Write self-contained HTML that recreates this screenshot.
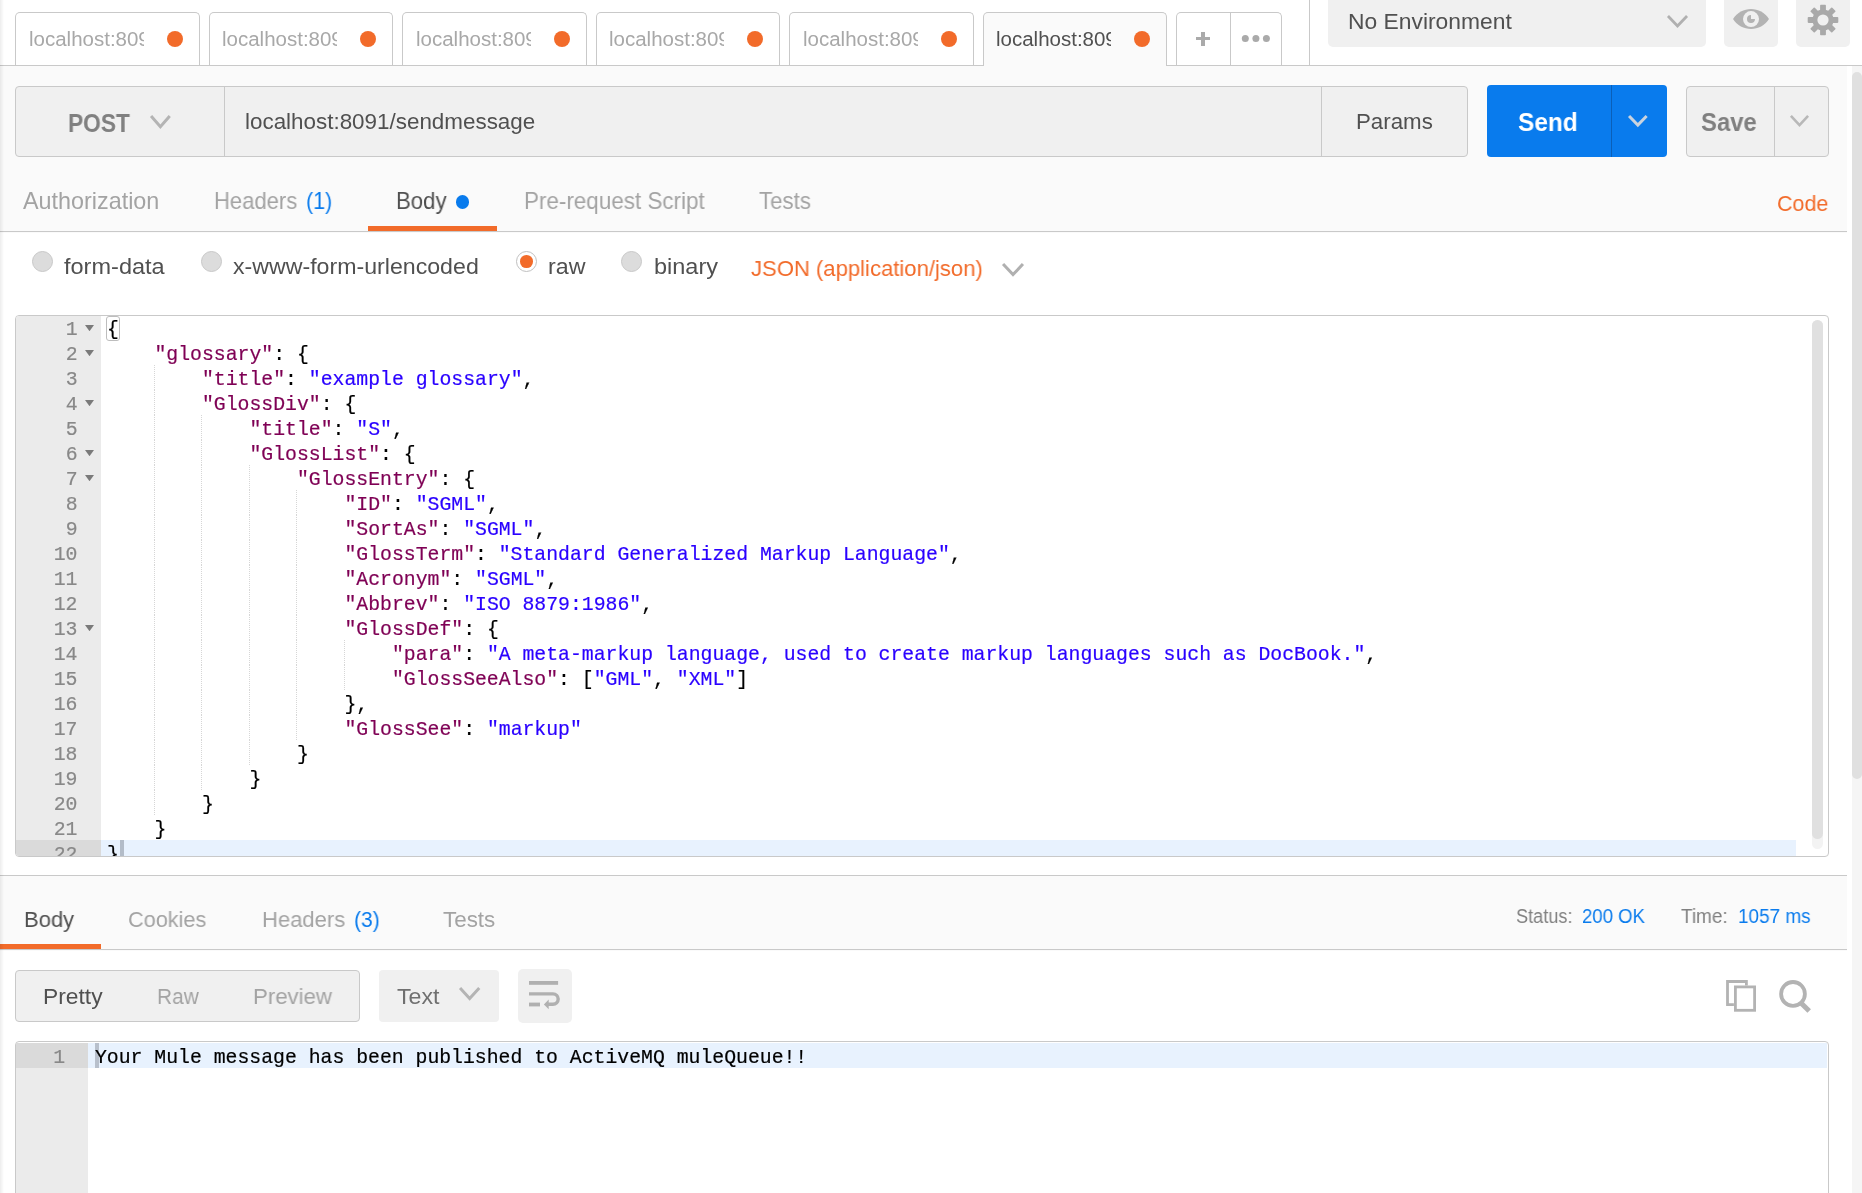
<!DOCTYPE html><html><head><meta charset="utf-8"><style>
html,body{margin:0;padding:0}
body{width:1862px;height:1193px;overflow:hidden;position:relative;background:#fafafa;font-family:"Liberation Sans",sans-serif}
.t{position:absolute;white-space:pre;line-height:0;transform-origin:0 0;will-change:transform}
.code{position:absolute;font-family:"Liberation Mono",monospace;font-size:19.79px;line-height:25px;white-space:pre;color:#000;will-change:transform;-webkit-text-stroke:0.2px currentColor}
.k{color:#7f0055}.s{color:#2a00ff}
</style></head><body>

<div style="position:absolute;left:0px;top:0px;width:1862px;height:66px;background:#fff"></div>
<div style="position:absolute;left:15px;top:11.5px;width:184.5px;height:54.5px;box-sizing:border-box;background:#fff;border:1px solid #c9c9c9;border-bottom:none;border-radius:5px 5px 0 0"></div>
<div style="position:absolute;left:208.5px;top:11.5px;width:184.5px;height:54.5px;box-sizing:border-box;background:#fff;border:1px solid #c9c9c9;border-bottom:none;border-radius:5px 5px 0 0"></div>
<div style="position:absolute;left:402px;top:11.5px;width:184.5px;height:54.5px;box-sizing:border-box;background:#fff;border:1px solid #c9c9c9;border-bottom:none;border-radius:5px 5px 0 0"></div>
<div style="position:absolute;left:595.5px;top:11.5px;width:184.5px;height:54.5px;box-sizing:border-box;background:#fff;border:1px solid #c9c9c9;border-bottom:none;border-radius:5px 5px 0 0"></div>
<div style="position:absolute;left:789px;top:11.5px;width:184.5px;height:54.5px;box-sizing:border-box;background:#fff;border:1px solid #c9c9c9;border-bottom:none;border-radius:5px 5px 0 0"></div>
<div style="position:absolute;left:982.5px;top:11.5px;width:184.5px;height:54.5px;box-sizing:border-box;background:#fafafa;border:1px solid #c9c9c9;border-bottom:none;border-radius:5px 5px 0 0"></div>
<div class="t" style="left:28.70px;top:39.00px;font-size:19.95px;color:#a8a8a8;transform:scaleX(1.0279);"><div style="position:absolute;left:0;top:-30px;height:60px;width:111.9px;overflow:hidden"><div style="position:absolute;left:0;top:30px;line-height:0">localhost:8091/sendmessage</div></div></div>
<svg style="position:absolute;left:164.5px;top:28.799999999999997px" width="20" height="20"><circle cx="10" cy="10" r="8" fill="#f26b2a"/></svg>
<div class="t" style="left:222.20px;top:39.00px;font-size:19.95px;color:#a8a8a8;transform:scaleX(1.0279);"><div style="position:absolute;left:0;top:-30px;height:60px;width:111.9px;overflow:hidden"><div style="position:absolute;left:0;top:30px;line-height:0">localhost:8091/sendmessage</div></div></div>
<svg style="position:absolute;left:358.0px;top:28.799999999999997px" width="20" height="20"><circle cx="10" cy="10" r="8" fill="#f26b2a"/></svg>
<div class="t" style="left:415.70px;top:39.00px;font-size:19.95px;color:#a8a8a8;transform:scaleX(1.0279);"><div style="position:absolute;left:0;top:-30px;height:60px;width:111.9px;overflow:hidden"><div style="position:absolute;left:0;top:30px;line-height:0">localhost:8091/sendmessage</div></div></div>
<svg style="position:absolute;left:551.5px;top:28.799999999999997px" width="20" height="20"><circle cx="10" cy="10" r="8" fill="#f26b2a"/></svg>
<div class="t" style="left:609.20px;top:39.00px;font-size:19.95px;color:#a8a8a8;transform:scaleX(1.0279);"><div style="position:absolute;left:0;top:-30px;height:60px;width:111.9px;overflow:hidden"><div style="position:absolute;left:0;top:30px;line-height:0">localhost:8091/sendmessage</div></div></div>
<svg style="position:absolute;left:745.0px;top:28.799999999999997px" width="20" height="20"><circle cx="10" cy="10" r="8" fill="#f26b2a"/></svg>
<div class="t" style="left:802.70px;top:39.00px;font-size:19.95px;color:#a8a8a8;transform:scaleX(1.0279);"><div style="position:absolute;left:0;top:-30px;height:60px;width:111.9px;overflow:hidden"><div style="position:absolute;left:0;top:30px;line-height:0">localhost:8091/sendmessage</div></div></div>
<svg style="position:absolute;left:938.5px;top:28.799999999999997px" width="20" height="20"><circle cx="10" cy="10" r="8" fill="#f26b2a"/></svg>
<div class="t" style="left:996.20px;top:39.00px;font-size:19.95px;color:#505050;transform:scaleX(1.0279);"><div style="position:absolute;left:0;top:-30px;height:60px;width:111.9px;overflow:hidden"><div style="position:absolute;left:0;top:30px;line-height:0">localhost:8091/sendmessage</div></div></div>
<svg style="position:absolute;left:1132.0px;top:28.799999999999997px" width="20" height="20"><circle cx="10" cy="10" r="8" fill="#f26b2a"/></svg>
<div style="position:absolute;left:1176px;top:11.5px;width:106px;height:54.5px;box-sizing:border-box;background:#fff;border:1px solid #c9c9c9;border-bottom:none;border-radius:5px 5px 0 0"></div>
<div style="position:absolute;left:1229.5px;top:11.5px;width:1px;height:54.5px;background:#c9c9c9"></div>
<div style="position:absolute;left:1196px;top:37px;width:14px;height:3.2px;background:#aaa"></div>
<div style="position:absolute;left:1201.4px;top:31.6px;width:3.2px;height:14px;background:#aaa"></div>
<svg style="position:absolute;left:1230px;top:28px" width="50" height="20" viewBox="1230 28 50 20"><circle cx="1245.3" cy="38.4" r="3.5" fill="#aaa"/><circle cx="1255.9" cy="38.4" r="3.5" fill="#aaa"/><circle cx="1266.4" cy="38.4" r="3.5" fill="#aaa"/></svg>
<div style="position:absolute;left:1308.5px;top:0px;width:1px;height:66px;background:#c9c9c9"></div>
<div style="position:absolute;left:0px;top:65px;width:1862px;height:1px;background:#c9c9c9"></div>
<div style="position:absolute;left:983.5px;top:60px;width:182.5px;height:8px;background:#fafafa"></div>
<div style="position:absolute;left:1328px;top:-6px;width:378px;height:52.8px;background:#f0f0f0;border-radius:5px"></div>
<div class="t" style="left:1348.20px;top:21.50px;font-size:22.13px;color:#505050;transform:scaleX(1.0323);">No Environment</div>
<svg style="position:absolute;left:1664px;top:11.5px" width="27" height="18.0"><polyline points="3.98,3.98 13.5,14.02 23.02,3.98" fill="none" stroke="#b0b0b0" stroke-width="2.8"/></svg>
<div style="position:absolute;left:1724px;top:-6px;width:54px;height:52.9px;background:#f0f0f0;border-radius:5px"></div>
<svg style="position:absolute;left:1731px;top:7px" width="40" height="25" viewBox="0 0 40 25">
<path d="M2 12.1 C10 -1.4 30 -1.4 38 12.1 C30 25.4 10 25.4 2 12.1Z" fill="#b3b3b3"/>
<circle cx="20" cy="12.1" r="8" fill="#f0f0f0"/>
<path d="M20 8 A4 4 0 1 0 24 12.1 L20 12.1Z" fill="#b3b3b3"/>
</svg>
<div style="position:absolute;left:1796px;top:-6px;width:54px;height:52.9px;background:#f0f0f0;border-radius:5px"></div>
<svg style="position:absolute;left:1803px;top:0px" width="40" height="40" viewBox="-20 -20 40 40">
<g fill="#a9a9a9"><rect x="-2.9" y="-15.3" width="5.8" height="8" rx="0.8" transform="rotate(0)"/><rect x="-2.9" y="-15.3" width="5.8" height="8" rx="0.8" transform="rotate(45)"/><rect x="-2.9" y="-15.3" width="5.8" height="8" rx="0.8" transform="rotate(90)"/><rect x="-2.9" y="-15.3" width="5.8" height="8" rx="0.8" transform="rotate(135)"/><rect x="-2.9" y="-15.3" width="5.8" height="8" rx="0.8" transform="rotate(180)"/><rect x="-2.9" y="-15.3" width="5.8" height="8" rx="0.8" transform="rotate(225)"/><rect x="-2.9" y="-15.3" width="5.8" height="8" rx="0.8" transform="rotate(270)"/><rect x="-2.9" y="-15.3" width="5.8" height="8" rx="0.8" transform="rotate(315)"/><circle r="10.6"/></g><circle r="5.6" fill="#f0f0f0"/></svg>
<div style="position:absolute;left:1847px;top:66px;width:5px;height:1127px;background:#fff"></div>
<div style="position:absolute;left:1852px;top:66px;width:10px;height:1127px;background:#f5f5f5"></div>
<div style="position:absolute;left:1852px;top:72px;width:10px;height:707px;background:#e0e0e0;border-radius:5px"></div>
<div style="position:absolute;left:14.5px;top:85.5px;width:1453.5px;height:71px;box-sizing:border-box;background:#f0f0f0;border:1px solid #c9c9c9;border-radius:4px"></div>
<div style="position:absolute;left:223.5px;top:85.5px;width:1px;height:71px;background:#c9c9c9"></div>
<div style="position:absolute;left:1321.3px;top:85.5px;width:1px;height:71px;background:#c9c9c9"></div>
<div class="t" style="left:67.90px;top:122.60px;font-size:25.27px;color:#808080;transform:scaleX(0.9004);font-weight:bold;">POST</div>
<svg style="position:absolute;left:147px;top:112px" width="26.80000000000001" height="18.700000000000003"><polyline points="4.05,4.05 13.400000000000006,14.650000000000002 22.75000000000001,4.05" fill="none" stroke="#b4b4b4" stroke-width="3"/></svg>
<div class="t" style="left:244.50px;top:121.50px;font-size:22.42px;color:#505050;">localhost:8091/sendmessage</div>
<div class="t" style="left:1356.20px;top:122.30px;font-size:22.13px;color:#505050;transform:scaleX(1.0074);">Params</div>
<div style="position:absolute;left:1487px;top:85px;width:179.7px;height:71.5px;background:#097bed;border-radius:4px"></div>
<div style="position:absolute;left:1611.2px;top:85px;width:1.2px;height:71.5px;background:#0a5fb8"></div>
<div class="t" style="left:1518.00px;top:122.40px;font-size:25.36px;color:#fff;transform:scaleX(0.9628);font-weight:bold;">Send</div>
<svg style="position:absolute;left:1625px;top:111.7px" width="25.700000000000045" height="17.099999999999994"><polyline points="4.05,4.05 12.850000000000023,13.049999999999994 21.650000000000045,4.05" fill="none" stroke="#c9d3df" stroke-width="3"/></svg>
<div style="position:absolute;left:1685.5px;top:85.5px;width:143px;height:71px;box-sizing:border-box;background:#f0f0f0;border:1px solid #c9c9c9;border-radius:4px"></div>
<div style="position:absolute;left:1773.5px;top:85.5px;width:1px;height:71px;background:#c9c9c9"></div>
<div class="t" style="left:1701.20px;top:122.40px;font-size:25.36px;color:#808080;transform:scaleX(0.9423);font-weight:bold;">Save</div>
<svg style="position:absolute;left:1786.6px;top:111.7px" width="25.0" height="17.099999999999994"><polyline points="3.91,3.91 12.5,13.189999999999994 21.09,3.91" fill="none" stroke="#b8b8b8" stroke-width="2.6"/></svg>
<div class="t" style="left:22.90px;top:201.00px;font-size:22.99px;color:#a3a3a3;transform:scaleX(1.0161);">Authorization</div>
<div class="t" style="left:214.20px;top:201.00px;font-size:22.99px;color:#a3a3a3;transform:scaleX(0.9574);">Headers</div>
<div class="t" style="left:306.20px;top:201.00px;font-size:22.99px;color:#097bed;transform:scaleX(0.9306);">(1)</div>
<div class="t" style="left:395.70px;top:201.00px;font-size:22.99px;color:#505050;transform:scaleX(0.9653);">Body</div>
<div style="position:absolute;left:456.0px;top:195.3px;width:13.4px;height:13.4px;border-radius:50%;background:#097bed"></div>
<div class="t" style="left:524.20px;top:201.00px;font-size:22.99px;color:#a3a3a3;transform:scaleX(0.9757);">Pre-request Script</div>
<div class="t" style="left:758.90px;top:201.00px;font-size:22.99px;color:#a3a3a3;transform:scaleX(0.9668);">Tests</div>
<div class="t" style="left:1777.20px;top:203.50px;font-size:22.23px;color:#f26b2a;transform:scaleX(0.9656);">Code</div>
<div style="position:absolute;left:368px;top:225.8px;width:129px;height:5px;background:#f26b2a"></div>
<div style="position:absolute;left:0px;top:231.3px;width:1847px;height:1px;background:#c9c9c9"></div>
<div style="position:absolute;left:0px;top:232.6px;width:1847px;height:642.7px;background:#fff"></div>
<div style="position:absolute;left:32.2px;top:251.10000000000002px;width:21px;height:21px;box-sizing:border-box;border-radius:50%;background:#dcdcdc;border:1.3px solid #c8c8c8"></div>
<div class="t" style="left:64.00px;top:267.30px;font-size:22.61px;color:#505050;transform:scaleX(1.0404);">form-data</div>
<div style="position:absolute;left:201.2px;top:251.10000000000002px;width:21px;height:21px;box-sizing:border-box;border-radius:50%;background:#dcdcdc;border:1.3px solid #c8c8c8"></div>
<div class="t" style="left:233.20px;top:267.30px;font-size:22.61px;color:#505050;transform:scaleX(1.0241);">x-www-form-urlencoded</div>
<div style="position:absolute;left:516.1px;top:250.8px;width:21px;height:21px;box-sizing:border-box;border-radius:50%;background:#fff;border:1.5px solid #c0c0c0"></div><div style="position:absolute;left:520.3000000000001px;top:255.0px;width:12.6px;height:12.6px;border-radius:50%;background:#f26b2a"></div>
<div class="t" style="left:547.80px;top:267.30px;font-size:22.61px;color:#505050;transform:scaleX(1.0270);">raw</div>
<div style="position:absolute;left:621.4px;top:250.8px;width:21px;height:21px;box-sizing:border-box;border-radius:50%;background:#dcdcdc;border:1.3px solid #c8c8c8"></div>
<div class="t" style="left:653.60px;top:267.30px;font-size:22.61px;color:#505050;transform:scaleX(1.0388);">binary</div>
<div class="t" style="left:751.20px;top:269.30px;font-size:22.61px;color:#f26b2a;transform:scaleX(0.9759);">JSON (application/json)</div>
<svg style="position:absolute;left:998.8px;top:259.6px" width="28.0" height="18.69999999999999"><polyline points="4.05,4.05 14.0,14.649999999999988 23.95,4.05" fill="none" stroke="#b0b0b0" stroke-width="3"/></svg>
<div style="position:absolute;left:14.5px;top:314.5px;width:1814.0px;height:542.0px;box-sizing:border-box;background:#fff;border:1px solid #c9c9c9;border-radius:4px;overflow:hidden"></div>
<div style="position:absolute;left:15.5px;top:315.5px;width:1812.0px;height:540.0px;overflow:hidden;border-radius:3px">
<div style="position:absolute;left:0px;top:0px;width:85.5px;height:542.0px;background:#ebebeb"></div>
<div style="position:absolute;left:0px;top:524.5px;width:85.5px;height:25px;background:#dadada"></div>
<div style="position:absolute;left:85.5px;top:524.5px;width:1695px;height:25px;background:#e8f2fe"></div>
<div style="position:absolute;left:138.3px;top:49.5px;width:1px;height:25px;background:repeating-linear-gradient(to bottom,#d6d6d6 0,#d6d6d6 1px,transparent 1px,transparent 2px)"></div>
<div style="position:absolute;left:138.3px;top:74.5px;width:1px;height:25px;background:repeating-linear-gradient(to bottom,#d6d6d6 0,#d6d6d6 1px,transparent 1px,transparent 2px)"></div>
<div style="position:absolute;left:138.3px;top:99.5px;width:1px;height:25px;background:repeating-linear-gradient(to bottom,#d6d6d6 0,#d6d6d6 1px,transparent 1px,transparent 2px)"></div>
<div style="position:absolute;left:185.81px;top:99.5px;width:1px;height:25px;background:repeating-linear-gradient(to bottom,#d6d6d6 0,#d6d6d6 1px,transparent 1px,transparent 2px)"></div>
<div style="position:absolute;left:138.3px;top:124.5px;width:1px;height:25px;background:repeating-linear-gradient(to bottom,#d6d6d6 0,#d6d6d6 1px,transparent 1px,transparent 2px)"></div>
<div style="position:absolute;left:185.81px;top:124.5px;width:1px;height:25px;background:repeating-linear-gradient(to bottom,#d6d6d6 0,#d6d6d6 1px,transparent 1px,transparent 2px)"></div>
<div style="position:absolute;left:138.3px;top:149.5px;width:1px;height:25px;background:repeating-linear-gradient(to bottom,#d6d6d6 0,#d6d6d6 1px,transparent 1px,transparent 2px)"></div>
<div style="position:absolute;left:185.81px;top:149.5px;width:1px;height:25px;background:repeating-linear-gradient(to bottom,#d6d6d6 0,#d6d6d6 1px,transparent 1px,transparent 2px)"></div>
<div style="position:absolute;left:233.31px;top:149.5px;width:1px;height:25px;background:repeating-linear-gradient(to bottom,#d6d6d6 0,#d6d6d6 1px,transparent 1px,transparent 2px)"></div>
<div style="position:absolute;left:138.3px;top:174.5px;width:1px;height:25px;background:repeating-linear-gradient(to bottom,#d6d6d6 0,#d6d6d6 1px,transparent 1px,transparent 2px)"></div>
<div style="position:absolute;left:185.81px;top:174.5px;width:1px;height:25px;background:repeating-linear-gradient(to bottom,#d6d6d6 0,#d6d6d6 1px,transparent 1px,transparent 2px)"></div>
<div style="position:absolute;left:233.31px;top:174.5px;width:1px;height:25px;background:repeating-linear-gradient(to bottom,#d6d6d6 0,#d6d6d6 1px,transparent 1px,transparent 2px)"></div>
<div style="position:absolute;left:280.82px;top:174.5px;width:1px;height:25px;background:repeating-linear-gradient(to bottom,#d6d6d6 0,#d6d6d6 1px,transparent 1px,transparent 2px)"></div>
<div style="position:absolute;left:138.3px;top:199.5px;width:1px;height:25px;background:repeating-linear-gradient(to bottom,#d6d6d6 0,#d6d6d6 1px,transparent 1px,transparent 2px)"></div>
<div style="position:absolute;left:185.81px;top:199.5px;width:1px;height:25px;background:repeating-linear-gradient(to bottom,#d6d6d6 0,#d6d6d6 1px,transparent 1px,transparent 2px)"></div>
<div style="position:absolute;left:233.31px;top:199.5px;width:1px;height:25px;background:repeating-linear-gradient(to bottom,#d6d6d6 0,#d6d6d6 1px,transparent 1px,transparent 2px)"></div>
<div style="position:absolute;left:280.82px;top:199.5px;width:1px;height:25px;background:repeating-linear-gradient(to bottom,#d6d6d6 0,#d6d6d6 1px,transparent 1px,transparent 2px)"></div>
<div style="position:absolute;left:138.3px;top:224.5px;width:1px;height:25px;background:repeating-linear-gradient(to bottom,#d6d6d6 0,#d6d6d6 1px,transparent 1px,transparent 2px)"></div>
<div style="position:absolute;left:185.81px;top:224.5px;width:1px;height:25px;background:repeating-linear-gradient(to bottom,#d6d6d6 0,#d6d6d6 1px,transparent 1px,transparent 2px)"></div>
<div style="position:absolute;left:233.31px;top:224.5px;width:1px;height:25px;background:repeating-linear-gradient(to bottom,#d6d6d6 0,#d6d6d6 1px,transparent 1px,transparent 2px)"></div>
<div style="position:absolute;left:280.82px;top:224.5px;width:1px;height:25px;background:repeating-linear-gradient(to bottom,#d6d6d6 0,#d6d6d6 1px,transparent 1px,transparent 2px)"></div>
<div style="position:absolute;left:138.3px;top:249.5px;width:1px;height:25px;background:repeating-linear-gradient(to bottom,#d6d6d6 0,#d6d6d6 1px,transparent 1px,transparent 2px)"></div>
<div style="position:absolute;left:185.81px;top:249.5px;width:1px;height:25px;background:repeating-linear-gradient(to bottom,#d6d6d6 0,#d6d6d6 1px,transparent 1px,transparent 2px)"></div>
<div style="position:absolute;left:233.31px;top:249.5px;width:1px;height:25px;background:repeating-linear-gradient(to bottom,#d6d6d6 0,#d6d6d6 1px,transparent 1px,transparent 2px)"></div>
<div style="position:absolute;left:280.82px;top:249.5px;width:1px;height:25px;background:repeating-linear-gradient(to bottom,#d6d6d6 0,#d6d6d6 1px,transparent 1px,transparent 2px)"></div>
<div style="position:absolute;left:138.3px;top:274.5px;width:1px;height:25px;background:repeating-linear-gradient(to bottom,#d6d6d6 0,#d6d6d6 1px,transparent 1px,transparent 2px)"></div>
<div style="position:absolute;left:185.81px;top:274.5px;width:1px;height:25px;background:repeating-linear-gradient(to bottom,#d6d6d6 0,#d6d6d6 1px,transparent 1px,transparent 2px)"></div>
<div style="position:absolute;left:233.31px;top:274.5px;width:1px;height:25px;background:repeating-linear-gradient(to bottom,#d6d6d6 0,#d6d6d6 1px,transparent 1px,transparent 2px)"></div>
<div style="position:absolute;left:280.82px;top:274.5px;width:1px;height:25px;background:repeating-linear-gradient(to bottom,#d6d6d6 0,#d6d6d6 1px,transparent 1px,transparent 2px)"></div>
<div style="position:absolute;left:138.3px;top:299.5px;width:1px;height:25px;background:repeating-linear-gradient(to bottom,#d6d6d6 0,#d6d6d6 1px,transparent 1px,transparent 2px)"></div>
<div style="position:absolute;left:185.81px;top:299.5px;width:1px;height:25px;background:repeating-linear-gradient(to bottom,#d6d6d6 0,#d6d6d6 1px,transparent 1px,transparent 2px)"></div>
<div style="position:absolute;left:233.31px;top:299.5px;width:1px;height:25px;background:repeating-linear-gradient(to bottom,#d6d6d6 0,#d6d6d6 1px,transparent 1px,transparent 2px)"></div>
<div style="position:absolute;left:280.82px;top:299.5px;width:1px;height:25px;background:repeating-linear-gradient(to bottom,#d6d6d6 0,#d6d6d6 1px,transparent 1px,transparent 2px)"></div>
<div style="position:absolute;left:138.3px;top:324.5px;width:1px;height:25px;background:repeating-linear-gradient(to bottom,#d6d6d6 0,#d6d6d6 1px,transparent 1px,transparent 2px)"></div>
<div style="position:absolute;left:185.81px;top:324.5px;width:1px;height:25px;background:repeating-linear-gradient(to bottom,#d6d6d6 0,#d6d6d6 1px,transparent 1px,transparent 2px)"></div>
<div style="position:absolute;left:233.31px;top:324.5px;width:1px;height:25px;background:repeating-linear-gradient(to bottom,#d6d6d6 0,#d6d6d6 1px,transparent 1px,transparent 2px)"></div>
<div style="position:absolute;left:280.82px;top:324.5px;width:1px;height:25px;background:repeating-linear-gradient(to bottom,#d6d6d6 0,#d6d6d6 1px,transparent 1px,transparent 2px)"></div>
<div style="position:absolute;left:328.32px;top:324.5px;width:1px;height:25px;background:repeating-linear-gradient(to bottom,#d6d6d6 0,#d6d6d6 1px,transparent 1px,transparent 2px)"></div>
<div style="position:absolute;left:138.3px;top:349.5px;width:1px;height:25px;background:repeating-linear-gradient(to bottom,#d6d6d6 0,#d6d6d6 1px,transparent 1px,transparent 2px)"></div>
<div style="position:absolute;left:185.81px;top:349.5px;width:1px;height:25px;background:repeating-linear-gradient(to bottom,#d6d6d6 0,#d6d6d6 1px,transparent 1px,transparent 2px)"></div>
<div style="position:absolute;left:233.31px;top:349.5px;width:1px;height:25px;background:repeating-linear-gradient(to bottom,#d6d6d6 0,#d6d6d6 1px,transparent 1px,transparent 2px)"></div>
<div style="position:absolute;left:280.82px;top:349.5px;width:1px;height:25px;background:repeating-linear-gradient(to bottom,#d6d6d6 0,#d6d6d6 1px,transparent 1px,transparent 2px)"></div>
<div style="position:absolute;left:328.32px;top:349.5px;width:1px;height:25px;background:repeating-linear-gradient(to bottom,#d6d6d6 0,#d6d6d6 1px,transparent 1px,transparent 2px)"></div>
<div style="position:absolute;left:138.3px;top:374.5px;width:1px;height:25px;background:repeating-linear-gradient(to bottom,#d6d6d6 0,#d6d6d6 1px,transparent 1px,transparent 2px)"></div>
<div style="position:absolute;left:185.81px;top:374.5px;width:1px;height:25px;background:repeating-linear-gradient(to bottom,#d6d6d6 0,#d6d6d6 1px,transparent 1px,transparent 2px)"></div>
<div style="position:absolute;left:233.31px;top:374.5px;width:1px;height:25px;background:repeating-linear-gradient(to bottom,#d6d6d6 0,#d6d6d6 1px,transparent 1px,transparent 2px)"></div>
<div style="position:absolute;left:280.82px;top:374.5px;width:1px;height:25px;background:repeating-linear-gradient(to bottom,#d6d6d6 0,#d6d6d6 1px,transparent 1px,transparent 2px)"></div>
<div style="position:absolute;left:138.3px;top:399.5px;width:1px;height:25px;background:repeating-linear-gradient(to bottom,#d6d6d6 0,#d6d6d6 1px,transparent 1px,transparent 2px)"></div>
<div style="position:absolute;left:185.81px;top:399.5px;width:1px;height:25px;background:repeating-linear-gradient(to bottom,#d6d6d6 0,#d6d6d6 1px,transparent 1px,transparent 2px)"></div>
<div style="position:absolute;left:233.31px;top:399.5px;width:1px;height:25px;background:repeating-linear-gradient(to bottom,#d6d6d6 0,#d6d6d6 1px,transparent 1px,transparent 2px)"></div>
<div style="position:absolute;left:280.82px;top:399.5px;width:1px;height:25px;background:repeating-linear-gradient(to bottom,#d6d6d6 0,#d6d6d6 1px,transparent 1px,transparent 2px)"></div>
<div style="position:absolute;left:138.3px;top:424.5px;width:1px;height:25px;background:repeating-linear-gradient(to bottom,#d6d6d6 0,#d6d6d6 1px,transparent 1px,transparent 2px)"></div>
<div style="position:absolute;left:185.81px;top:424.5px;width:1px;height:25px;background:repeating-linear-gradient(to bottom,#d6d6d6 0,#d6d6d6 1px,transparent 1px,transparent 2px)"></div>
<div style="position:absolute;left:233.31px;top:424.5px;width:1px;height:25px;background:repeating-linear-gradient(to bottom,#d6d6d6 0,#d6d6d6 1px,transparent 1px,transparent 2px)"></div>
<div style="position:absolute;left:138.3px;top:449.5px;width:1px;height:25px;background:repeating-linear-gradient(to bottom,#d6d6d6 0,#d6d6d6 1px,transparent 1px,transparent 2px)"></div>
<div style="position:absolute;left:185.81px;top:449.5px;width:1px;height:25px;background:repeating-linear-gradient(to bottom,#d6d6d6 0,#d6d6d6 1px,transparent 1px,transparent 2px)"></div>
<div style="position:absolute;left:138.3px;top:474.5px;width:1px;height:25px;background:repeating-linear-gradient(to bottom,#d6d6d6 0,#d6d6d6 1px,transparent 1px,transparent 2px)"></div>
<div style="position:absolute;left:90.8px;top:0.5px;width:14.1px;height:25.1px;box-sizing:border-box;border:1.2px solid #bdbdbd;border-radius:3px"></div>
<div style="position:absolute;left:104.5px;top:524.5px;width:3.8px;height:15.5px;background:#b3bcc8"></div>
<div class="code" style="left:-15.5px;top:2.7px;width:77.5px;text-align:right;color:#888">1</div>
<svg style="position:absolute;left:69.5px;top:9.800000000000011px" width="9" height="6.2"><polygon points="0,0 9,0 4.5,6.2" fill="#7a7a7a"/></svg>
<div class="code" style="left:-15.5px;top:27.7px;width:77.5px;text-align:right;color:#888">2</div>
<svg style="position:absolute;left:69.5px;top:34.80000000000001px" width="9" height="6.2"><polygon points="0,0 9,0 4.5,6.2" fill="#7a7a7a"/></svg>
<div class="code" style="left:-15.5px;top:52.7px;width:77.5px;text-align:right;color:#888">3</div>
<div class="code" style="left:-15.5px;top:77.7px;width:77.5px;text-align:right;color:#888">4</div>
<svg style="position:absolute;left:69.5px;top:84.80000000000001px" width="9" height="6.2"><polygon points="0,0 9,0 4.5,6.2" fill="#7a7a7a"/></svg>
<div class="code" style="left:-15.5px;top:102.7px;width:77.5px;text-align:right;color:#888">5</div>
<div class="code" style="left:-15.5px;top:127.7px;width:77.5px;text-align:right;color:#888">6</div>
<svg style="position:absolute;left:69.5px;top:134.8px" width="9" height="6.2"><polygon points="0,0 9,0 4.5,6.2" fill="#7a7a7a"/></svg>
<div class="code" style="left:-15.5px;top:152.7px;width:77.5px;text-align:right;color:#888">7</div>
<svg style="position:absolute;left:69.5px;top:159.8px" width="9" height="6.2"><polygon points="0,0 9,0 4.5,6.2" fill="#7a7a7a"/></svg>
<div class="code" style="left:-15.5px;top:177.7px;width:77.5px;text-align:right;color:#888">8</div>
<div class="code" style="left:-15.5px;top:202.7px;width:77.5px;text-align:right;color:#888">9</div>
<div class="code" style="left:-15.5px;top:227.7px;width:77.5px;text-align:right;color:#888">10</div>
<div class="code" style="left:-15.5px;top:252.7px;width:77.5px;text-align:right;color:#888">11</div>
<div class="code" style="left:-15.5px;top:277.7px;width:77.5px;text-align:right;color:#888">12</div>
<div class="code" style="left:-15.5px;top:302.7px;width:77.5px;text-align:right;color:#888">13</div>
<svg style="position:absolute;left:69.5px;top:309.79999999999995px" width="9" height="6.2"><polygon points="0,0 9,0 4.5,6.2" fill="#7a7a7a"/></svg>
<div class="code" style="left:-15.5px;top:327.7px;width:77.5px;text-align:right;color:#888">14</div>
<div class="code" style="left:-15.5px;top:352.7px;width:77.5px;text-align:right;color:#888">15</div>
<div class="code" style="left:-15.5px;top:377.7px;width:77.5px;text-align:right;color:#888">16</div>
<div class="code" style="left:-15.5px;top:402.7px;width:77.5px;text-align:right;color:#888">17</div>
<div class="code" style="left:-15.5px;top:427.7px;width:77.5px;text-align:right;color:#888">18</div>
<div class="code" style="left:-15.5px;top:452.7px;width:77.5px;text-align:right;color:#888">19</div>
<div class="code" style="left:-15.5px;top:477.7px;width:77.5px;text-align:right;color:#888">20</div>
<div class="code" style="left:-15.5px;top:502.7px;width:77.5px;text-align:right;color:#888">21</div>
<div class="code" style="left:-15.5px;top:527.7px;width:77.5px;text-align:right;color:#888">22</div>
<div class="code" style="left:91.4px;top:2.7px">{</div>
<div class="code" style="left:91.4px;top:27.7px">    <span class="k">&quot;glossary&quot;</span>: {</div>
<div class="code" style="left:91.4px;top:52.7px">        <span class="k">&quot;title&quot;</span>: <span class="s">&quot;example glossary&quot;</span>,</div>
<div class="code" style="left:91.4px;top:77.7px">        <span class="k">&quot;GlossDiv&quot;</span>: {</div>
<div class="code" style="left:91.4px;top:102.7px">            <span class="k">&quot;title&quot;</span>: <span class="s">&quot;S&quot;</span>,</div>
<div class="code" style="left:91.4px;top:127.7px">            <span class="k">&quot;GlossList&quot;</span>: {</div>
<div class="code" style="left:91.4px;top:152.7px">                <span class="k">&quot;GlossEntry&quot;</span>: {</div>
<div class="code" style="left:91.4px;top:177.7px">                    <span class="k">&quot;ID&quot;</span>: <span class="s">&quot;SGML&quot;</span>,</div>
<div class="code" style="left:91.4px;top:202.7px">                    <span class="k">&quot;SortAs&quot;</span>: <span class="s">&quot;SGML&quot;</span>,</div>
<div class="code" style="left:91.4px;top:227.7px">                    <span class="k">&quot;GlossTerm&quot;</span>: <span class="s">&quot;Standard Generalized Markup Language&quot;</span>,</div>
<div class="code" style="left:91.4px;top:252.7px">                    <span class="k">&quot;Acronym&quot;</span>: <span class="s">&quot;SGML&quot;</span>,</div>
<div class="code" style="left:91.4px;top:277.7px">                    <span class="k">&quot;Abbrev&quot;</span>: <span class="s">&quot;ISO 8879:1986&quot;</span>,</div>
<div class="code" style="left:91.4px;top:302.7px">                    <span class="k">&quot;GlossDef&quot;</span>: {</div>
<div class="code" style="left:91.4px;top:327.7px">                        <span class="k">&quot;para&quot;</span>: <span class="s">&quot;A meta-markup language, used to create markup languages such as DocBook.&quot;</span>,</div>
<div class="code" style="left:91.4px;top:352.7px">                        <span class="k">&quot;GlossSeeAlso&quot;</span>: [<span class="s">&quot;GML&quot;</span>, <span class="s">&quot;XML&quot;</span>]</div>
<div class="code" style="left:91.4px;top:377.7px">                    },</div>
<div class="code" style="left:91.4px;top:402.7px">                    <span class="k">&quot;GlossSee&quot;</span>: <span class="s">&quot;markup&quot;</span></div>
<div class="code" style="left:91.4px;top:427.7px">                }</div>
<div class="code" style="left:91.4px;top:452.7px">            }</div>
<div class="code" style="left:91.4px;top:477.7px">        }</div>
<div class="code" style="left:91.4px;top:502.7px">    }</div>
<div class="code" style="left:91.4px;top:527.7px">}</div>
<div style="position:absolute;left:1796.5px;top:4.5px;width:11px;height:529.3px;background:#f3f3f3;border-radius:5.5px"></div>
<div style="position:absolute;left:1796.5px;top:4.5px;width:11px;height:519.3px;background:#e0e0e0;border-radius:5.5px"></div>
</div>
<div style="position:absolute;left:0px;top:875.3px;width:1847px;height:1px;background:#c9c9c9"></div>
<div style="position:absolute;left:0px;top:876.6px;width:1847px;height:72.7px;background:#fafafa"></div>
<div class="t" style="left:23.80px;top:919.50px;font-size:22.42px;color:#505050;transform:scaleX(0.9820);">Body</div>
<div class="t" style="left:128.20px;top:919.50px;font-size:22.42px;color:#a3a3a3;transform:scaleX(0.9673);">Cookies</div>
<div class="t" style="left:261.70px;top:919.50px;font-size:22.42px;color:#a3a3a3;transform:scaleX(0.9829);">Headers</div>
<div class="t" style="left:354.20px;top:919.50px;font-size:22.42px;color:#097bed;transform:scaleX(0.9359);">(3)</div>
<div class="t" style="left:442.60px;top:919.50px;font-size:22.42px;color:#a3a3a3;">Tests</div>
<div style="position:absolute;left:0px;top:943.7px;width:101px;height:5px;background:#f26b2a"></div>
<div style="position:absolute;left:0px;top:949.3px;width:1847px;height:1px;background:#c9c9c9"></div>
<div class="t" style="left:1515.70px;top:916.00px;font-size:19.95px;color:#808080;transform:scaleX(0.9108);">Status:</div>
<div class="t" style="left:1581.80px;top:916.00px;font-size:19.95px;color:#097bed;transform:scaleX(0.9315);">200 OK</div>
<div class="t" style="left:1681.00px;top:916.00px;font-size:19.95px;color:#808080;transform:scaleX(0.9517);">Time:</div>
<div class="t" style="left:1737.90px;top:916.00px;font-size:19.95px;color:#097bed;transform:scaleX(0.9489);">1057 ms</div>
<div style="position:absolute;left:0px;top:950.6px;width:1847px;height:243px;background:#fff"></div>
<div style="position:absolute;left:14.5px;top:969.9px;width:345.7px;height:52px;box-sizing:border-box;background:#f0f0f0;border:1px solid #c9c9c9;border-radius:4px"></div>
<div class="t" style="left:43.20px;top:997.30px;font-size:22.42px;color:#505050;transform:scaleX(1.0185);">Pretty</div>
<div class="t" style="left:157.00px;top:997.30px;font-size:22.42px;color:#a3a3a3;transform:scaleX(0.9299);">Raw</div>
<div class="t" style="left:253.20px;top:997.30px;font-size:22.42px;color:#a3a3a3;transform:scaleX(0.9910);">Preview</div>
<div style="position:absolute;left:379.2px;top:969.9px;width:120.1px;height:52px;background:#f0f0f0;border-radius:4px"></div>
<div class="t" style="left:397.20px;top:997.30px;font-size:22.42px;color:#707070;transform:scaleX(1.0355);">Text</div>
<svg style="position:absolute;left:456px;top:984px" width="27.30000000000001" height="18.5"><polyline points="4.05,4.05 13.650000000000006,14.45 23.25000000000001,4.05" fill="none" stroke="#b4b4b4" stroke-width="3"/></svg>
<div style="position:absolute;left:518.2px;top:968.8px;width:53.7px;height:54.2px;background:#f0f0f0;border-radius:5px"></div>
<svg style="position:absolute;left:518px;top:969px" width="54" height="54" viewBox="518 969 54 54">
<rect x="529" y="981" width="29.1" height="3.8" fill="#b0b0b0"/>
<path d="M529 993.9 H553 A5.2 5.2 0 0 1 553 1004.3 H547" fill="none" stroke="#b0b0b0" stroke-width="3.4"/>
<rect x="529" y="1002.6" width="11" height="3.8" fill="#b0b0b0"/>
<polygon points="543.9,1004.4 548.7,999.6 548.7,1009.2" fill="#b0b0b0"/>
</svg>
<svg style="position:absolute;left:1720px;top:975px" width="100" height="45" viewBox="1720 975 100 45">
<path d="M1733.9 1004.7 H1727.5 V981.5 H1746.4 V985.5" fill="none" stroke="#b3b3b3" stroke-width="2.8"/>
<rect x="1735.4" y="986.9" width="19.2" height="23.4" fill="none" stroke="#b3b3b3" stroke-width="2.8"/>
<circle cx="1793" cy="993.9" r="11.9" fill="none" stroke="#b3b3b3" stroke-width="3.8"/>
<line x1="1800.5" y1="1002.4" x2="1809.2" y2="1011.1" stroke="#b3b3b3" stroke-width="5"/>
</svg>
<div style="position:absolute;left:14.5px;top:1041.2px;width:1814.0px;height:178.79999999999995px;box-sizing:border-box;background:#fff;border:1px solid #c9c9c9;border-radius:4px"></div>
<div style="position:absolute;left:15.8px;top:1042.5px;width:72.2px;height:178.79999999999995px;background:#ebebeb"></div>
<div style="position:absolute;left:15.8px;top:1042.5px;width:72.2px;height:25px;background:#dadada"></div>
<div style="position:absolute;left:88px;top:1042.5px;width:1739.2px;height:25px;background:#e8f2fe"></div>
<div style="position:absolute;left:95px;top:1043px;width:3.9px;height:24.5px;background:#b8c0cc"></div>
<div class="code" style="left:0px;top:1045.7px;width:65px;text-align:right;color:#888">1</div>
<div class="code" style="left:95.2px;top:1045.7px">Your Mule message has been published to ActiveMQ muleQueue!!</div>
<div style="position:absolute;left:0px;top:0px;width:4px;height:1193px;background:linear-gradient(to right,rgba(0,0,0,0.07),rgba(0,0,0,0))"></div>
</body></html>
